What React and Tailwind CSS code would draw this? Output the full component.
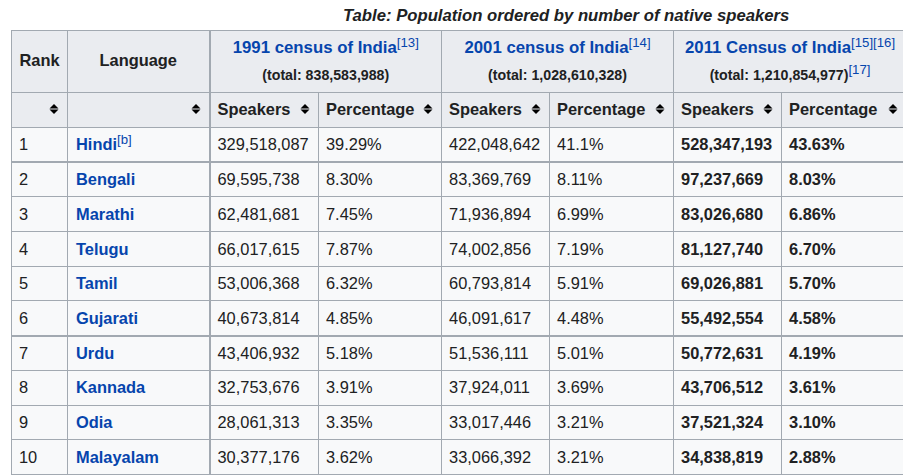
import React from 'react';

const rows = [
  ['1', 'Hindi', 'b', '329,518,087', '39.29%', '422,048,642', '41.1%', '528,347,193', '43.63%'],
  ['2', 'Bengali', null, '69,595,738', '8.30%', '83,369,769', '8.11%', '97,237,669', '8.03%'],
  ['3', 'Marathi', null, '62,481,681', '7.45%', '71,936,894', '6.99%', '83,026,680', '6.86%'],
  ['4', 'Telugu', null, '66,017,615', '7.87%', '74,002,856', '7.19%', '81,127,740', '6.70%'],
  ['5', 'Tamil', null, '53,006,368', '6.32%', '60,793,814', '5.91%', '69,026,881', '5.70%'],
  ['6', 'Gujarati', null, '40,673,814', '4.85%', '46,091,617', '4.48%', '55,492,554', '4.58%'],
  ['7', 'Urdu', null, '43,406,932', '5.18%', '51,536,111', '5.01%', '50,772,631', '4.19%'],
  ['8', 'Kannada', null, '32,753,676', '3.91%', '37,924,011', '3.69%', '43,706,512', '3.61%'],
  ['9', 'Odia', null, '28,061,313', '3.35%', '33,017,446', '3.21%', '37,521,324', '3.10%'],
  ['10', 'Malayalam', null, '30,377,176', '3.62%', '33,066,392', '3.21%', '34,838,819', '2.88%'],
];

function SortIcon() {
  return (
    <svg width="10" height="10" viewBox="0 0 10 10" className="shrink-0">
      <polygon points="0.5,4.4 5,0 9.5,4.4" fill="#000" />
      <polygon points="0.5,5.6 5,10 9.5,5.6" fill="#000" />
    </svg>
  );
}

function Ref({ children }) {
  return (
    <sup className="relative top-[-6px] align-baseline text-[13.2px] font-normal leading-none text-[#0645ad]">
      [{children}]
    </sup>
  );
}

function Census({ title, total, refs, totalRef, thick }) {
  return (
    <th colSpan={2} className={`border border-[#a2a9b1] ${thick ? 'border-l-2' : ''} align-top px-[7px] pt-[5px] text-center font-bold`}>
      <div className="text-[16.8px] leading-[24px] whitespace-nowrap">
        <span className="text-[#0645ad]">{title}</span>
        {refs.map((r) => (
          <Ref key={r}>{r}</Ref>
        ))}
      </div>
      <div className="mt-[5px] text-[14.2px] leading-[20px] whitespace-nowrap">
        ({total}){totalRef && <Ref>{totalRef}</Ref>}
      </div>
    </th>
  );
}

function SortHead({ label, thick }) {
  return (
    <th className={`border border-[#a2a9b1] ${thick ? 'border-l-2' : ''} h-[35px] pl-[7px] pr-[8px] pb-[2px] font-bold`}>
      <div className="flex items-center justify-between gap-2">
        <span>{label}</span>
        <SortIcon />
      </div>
    </th>
  );
}

export default function App() {
  return (
    <div className="w-[903px] h-[476px] overflow-hidden bg-white font-['Liberation_Sans',Arial,sans-serif] text-[#202122]">
      <div className="h-[30px] pl-[343px] pt-[6px] text-[16.7px] leading-[20px] font-bold italic whitespace-nowrap">
        Table: Population ordered by number of native speakers
      </div>
      <table className="ml-[11px] w-[895px] table-fixed border-collapse bg-[#f8f9fa] text-[16.4px]">
        <colgroup>
          <col className="w-[56px]" />
          <col className="w-[142px]" />
          <col className="w-[109px]" />
          <col className="w-[123px]" />
          <col className="w-[108px]" />
          <col className="w-[124px]" />
          <col className="w-[108px]" />
          <col className="w-[125px]" />
        </colgroup>
        <thead className="bg-[#eaecf0]">
          <tr className="h-[62px]">
            <th className="border border-[#a2a9b1] pb-[3px] text-center font-bold">Rank</th>
            <th className="border border-[#a2a9b1] pb-[3px] text-center font-bold">Language</th>
            <Census title="1991 census of India" total="total: 838,583,988" refs={['13']} thick />
            <Census title="2001 census of India" total="total: 1,028,610,328" refs={['14']} />
            <Census title="2011 Census of India" total="total: 1,210,854,977" refs={['15', '16']} totalRef="17" />
          </tr>
          <tr>
            <th className="border border-[#a2a9b1] h-[35px] pr-[8px] pb-[2px]">
              <div className="flex justify-end"><SortIcon /></div>
            </th>
            <th className="border border-[#a2a9b1] h-[35px] pr-[8px] pb-[2px]">
              <div className="flex justify-end"><SortIcon /></div>
            </th>
            <SortHead label="Speakers" thick />
            <SortHead label="Percentage" />
            <SortHead label="Speakers" />
            <SortHead label="Percentage" />
            <SortHead label="Speakers" />
            <SortHead label="Percentage" />
          </tr>
        </thead>
        <tbody>
          {rows.map((r, i) => {
            const rowBorder = i === 0 || i === 5 ? 'border-b-2' : '';
            return (
              <tr key={r[0]}>
                <td className={`border border-[#a2a9b1] ${rowBorder} h-[34.7px] px-[7px] whitespace-nowrap`}>{r[0]}</td>
                <td className={`border border-[#a2a9b1] ${rowBorder} px-[8px] whitespace-nowrap`}>
                  <span className="font-bold text-[#0645ad]">{r[1]}</span>
                  {r[2] && <Ref>{r[2]}</Ref>}
                </td>
                <td className={`border border-[#a2a9b1] border-l-2 ${rowBorder} px-[7px] whitespace-nowrap`}>{r[3]}</td>
                <td className={`border border-[#a2a9b1] ${rowBorder} px-[7px] whitespace-nowrap`}>{r[4]}</td>
                <td className={`border border-[#a2a9b1] ${rowBorder} px-[7px] whitespace-nowrap`}>{r[5]}</td>
                <td className={`border border-[#a2a9b1] ${rowBorder} px-[7px] whitespace-nowrap`}>{r[6]}</td>
                <td className={`border border-[#a2a9b1] ${rowBorder} px-[7px] font-bold whitespace-nowrap`}>{r[7]}</td>
                <td className={`border border-[#a2a9b1] ${rowBorder} px-[7px] font-bold whitespace-nowrap`}>{r[8]}</td>
              </tr>
            );
          })}
        </tbody>
      </table>
    </div>
  );
}
